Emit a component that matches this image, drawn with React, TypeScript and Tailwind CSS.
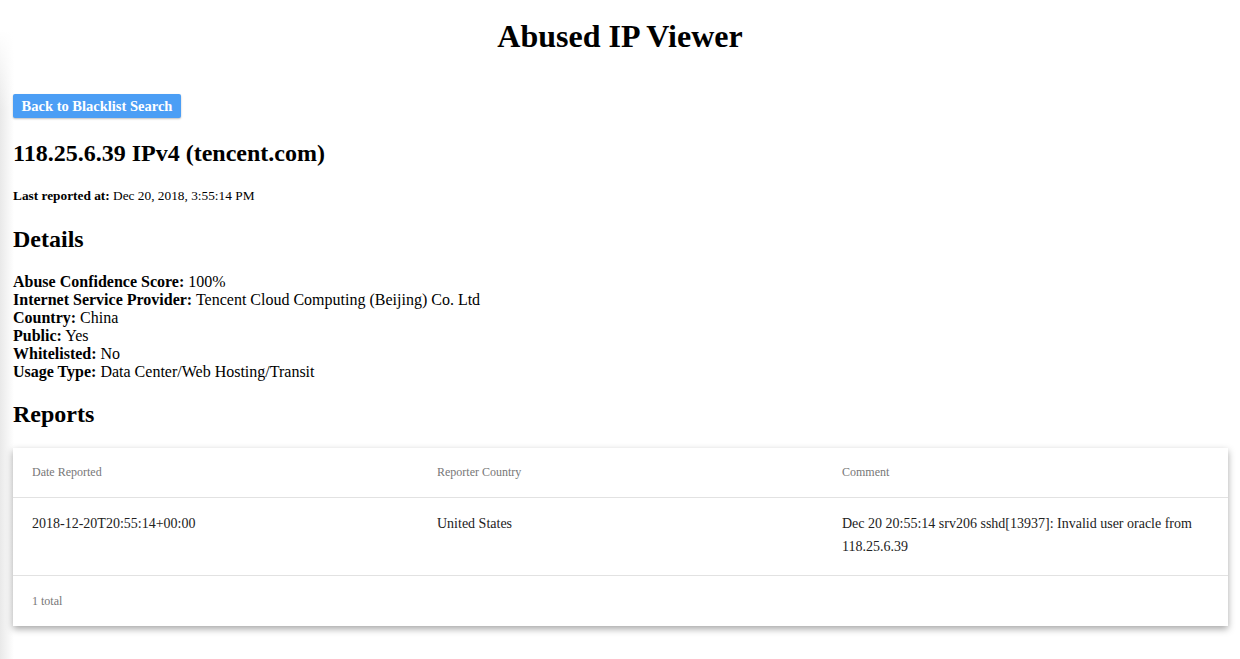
const details: [string, string][] = [
  ["Abuse Confidence Score:", "100%"],
  ["Internet Service Provider:", "Tencent Cloud Computing (Beijing) Co. Ltd"],
  ["Country:", "China"],
  ["Public:", "Yes"],
  ["Whitelisted:", "No"],
  ["Usage Type:", "Data Center/Web Hosting/Transit"],
];

const reports = [
  {
    date: "2018-12-20T20:55:14+00:00",
    country: "United States",
    comment: "Dec 20 20:55:14 srv206 sshd[13937]: Invalid user oracle from 118.25.6.39",
  },
];

export default function App() {
  return (
    <div className="min-h-screen bg-white bg-[linear-gradient(to_bottom,#ffffff_30px,rgba(255,255,255,0)_110px),linear-gradient(to_right,#e9e9e9,#ffffff_14px)] font-['Liberation_Serif',serif] text-black">
      <h1 className="pt-[18px] text-center text-[32px] font-bold leading-[37px]">Abused IP Viewer</h1>

      <div className="px-[13px] pr-[12px]">
        <button
          type="button"
          className="mt-[39px] block h-[24px] w-[168px] rounded-[2px] bg-[#4b9ef5] text-center text-[14.5px] font-bold leading-[24px] text-white shadow-[0_1px_2px_rgba(0,0,0,0.25)]"
        >
          Back to Blacklist Search
        </button>

        <h2 className="mt-[21px] text-[24px] font-bold leading-[28px]">118.25.6.39 IPv4 (tencent.com)</h2>

        <p className="mt-[21px] text-[13.33px] leading-[16px]">
          <span className="font-bold">Last reported at:</span> Dec 20, 2018, 3:55:14 PM
        </p>

        <h2 className="mt-[21px] text-[24px] font-bold leading-[28px]">Details</h2>

        <div className="mt-[20px] text-[16px] leading-[18px]">
          {details.map(([label, value]) => (
            <div key={label}>
              <span className="font-bold">{label}</span> {value}
            </div>
          ))}
        </div>

        <h2 className="mt-[19px] text-[24px] font-bold leading-[28px]">Reports</h2>

        <div className="mt-[20px] bg-white shadow-[0_3px_7px_rgba(0,0,0,0.35)]">
          <div className="grid grid-cols-3 border-b border-[#e2e2e2] pt-[16px] pb-[17px] text-[12px] leading-[16px] text-[#777]">
            <div className="pl-[19px]">Date Reported</div>
            <div className="pl-[19px]">Reporter Country</div>
            <div className="pl-[19px]">Comment</div>
          </div>
          {reports.map((r) => (
            <div
              key={r.date}
              className="grid grid-cols-3 border-b border-[#e2e2e2] pt-[14px] pb-[17px] text-[14px] leading-[23px] text-[#222]"
            >
              <div className="pl-[19px] pr-[18px]">{r.date}</div>
              <div className="pl-[19px] pr-[18px]">{r.country}</div>
              <div className="pl-[19px] pr-[18px]">{r.comment}</div>
            </div>
          ))}
          <div className="flex h-[50px] items-center pl-[19px] text-[12px] text-[#777]">{reports.length} total</div>
        </div>
      </div>
    </div>
  );
}
